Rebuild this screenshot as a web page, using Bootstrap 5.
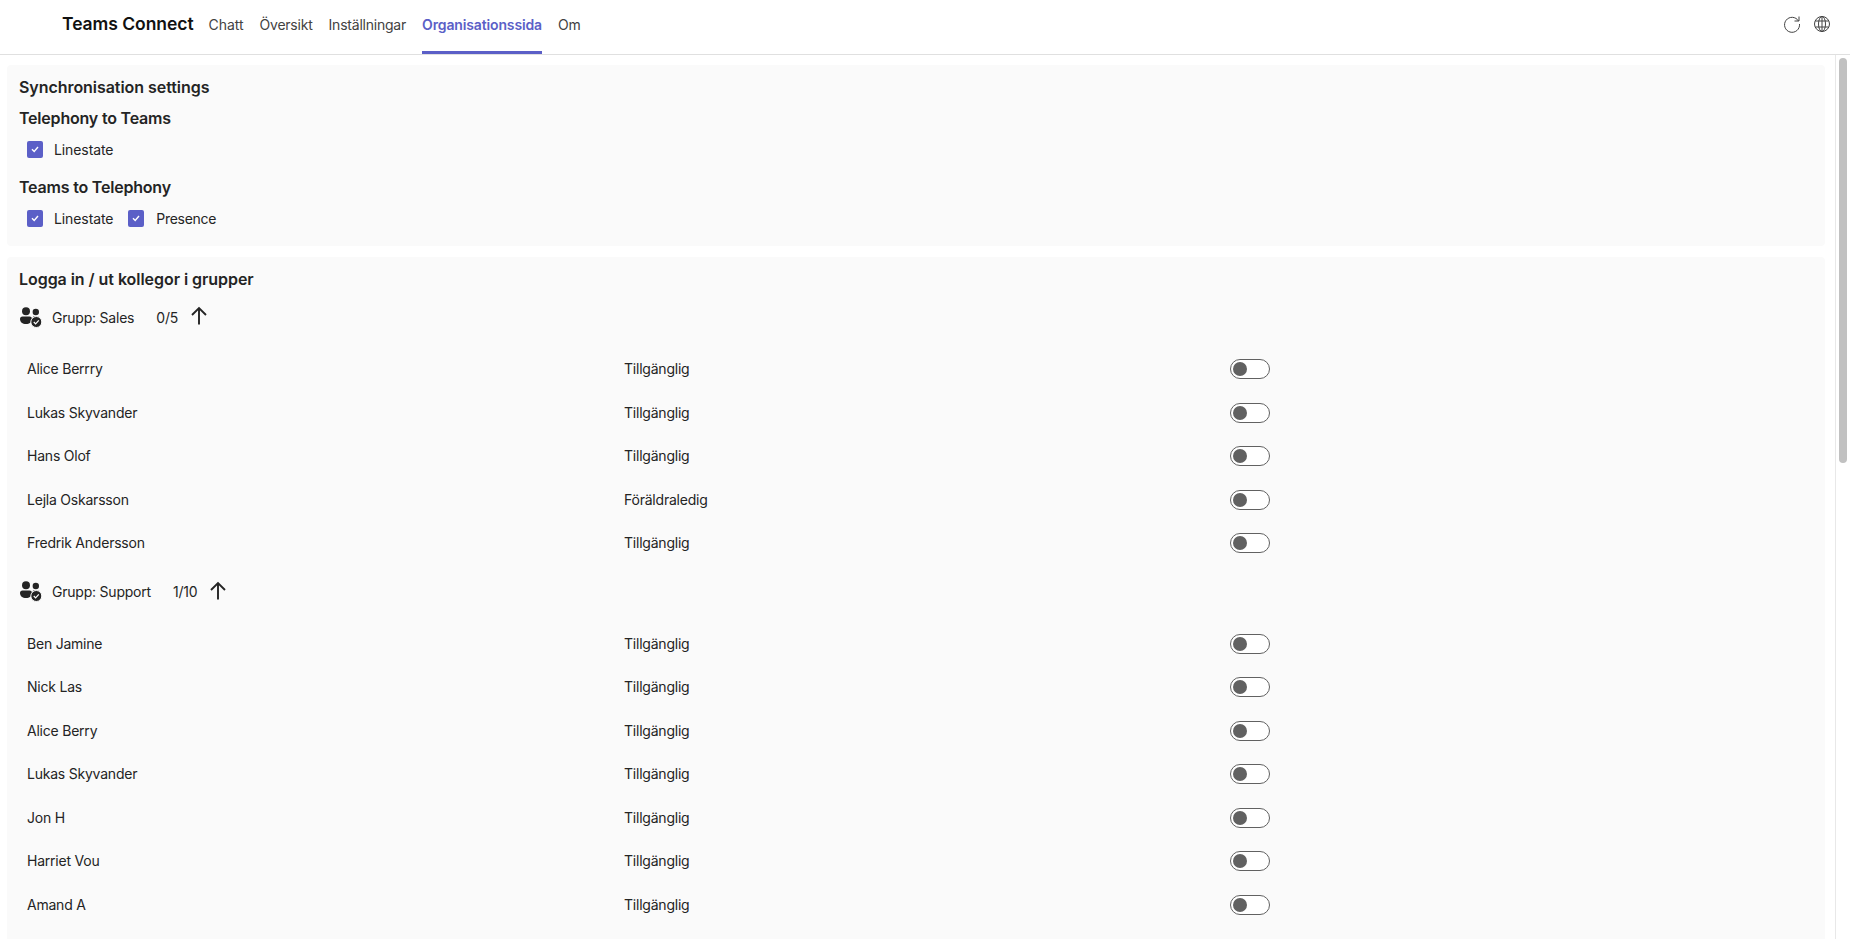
<!doctype html>
<html lang="sv"><head><meta charset="utf-8"><title>Teams Connect</title>
<link href="https://cdn.jsdelivr.net/npm/bootstrap@5.3.0/dist/css/bootstrap.min.css" rel="stylesheet">
<style>
html,body{height:100%;overflow:hidden}
body{font-family:Inter,"Liberation Sans",sans-serif;font-size:14px;letter-spacing:-.22px;color:#242424;background:#fff}
.topbar{height:55px;border-bottom:1px solid #e0e0e0;padding-left:62px;padding-right:19px}
.brand-name{font-size:17.5px;font-weight:600;letter-spacing:-.05px;color:#111;margin-right:15px;margin-bottom:6px}
.tab-item{height:54px;display:flex;align-items:center;color:#424242;text-decoration:none;margin-right:16px;font-size:14px;border-bottom:3px solid transparent;padding-bottom:3px}
.tab-item:first-of-type{letter-spacing:-.05px}
.tab-on{color:#5b5fc7;font-weight:600;letter-spacing:-.14px;border-bottom-color:#5b5fc7}
.shell{height:884px;overflow:hidden}
.pane{flex:1;min-width:0;padding:10px 10px 0 7px;overflow:hidden}
.sheet{background:#fafafa;border-radius:4px;padding:10px 11px 12px 12px;margin-bottom:11px}
.h-main{font-size:16px;font-weight:600;line-height:24px;margin:0;letter-spacing:-.05px}
.h-sub{font-size:16px;font-weight:600;line-height:24px;margin:0;letter-spacing:-.2px}
.h-first{margin-top:7px}
.h-next{margin-top:10px}
.checks{display:flex;height:32px;align-items:center;padding-left:8px;gap:15px;margin-top:3px;letter-spacing:-.1px}
.chk{display:flex;align-items:center;gap:11px}
.chk+.chk{gap:12px;letter-spacing:-.3px}
.tick{width:16px;height:17px;border-radius:2px;background:#5b5fc7;display:flex;align-items:center;justify-content:center}
.grp{height:34px;display:flex;align-items:center;padding-left:1px;margin-top:9px}
.grp-name{margin-left:10px}
.grp-count{margin-left:22px}
.grp-arrow{margin-left:12px;margin-bottom:2px}
.per-row{display:grid;grid-template-columns:597px 606px 1fr;align-items:center;height:43.5px;padding-left:8px}
.tgl{display:block;width:40px;height:20px;border:1px solid #616161;border-radius:10px;position:relative;background:#fff;margin-top:1px}
.tgl::after{content:"";position:absolute;left:2px;top:2px;width:14px;height:14px;border-radius:50%;background:#616161}
.rail{width:15px;border-left:1px solid #e8e8e8;background:#fff;padding:3px 3px 0 3px;flex:none}
.thumb{height:405px;background:#c1c1c1;border-radius:4px}
.people{padding-top:13px;padding-bottom:1px}
.icons-end{gap:12px;margin-bottom:6px}
</style></head>
<body>
<nav class="topbar d-flex align-items-center">
  <span class="brand-name">Teams Connect</span>
  <a class="tab-item" href="#">Chatt</a>
  <a class="tab-item" href="#">Översikt</a>
  <a class="tab-item" href="#">Inställningar</a>
  <a class="tab-item tab-on" href="#">Organisationssida</a>
  <a class="tab-item" href="#">Om</a>
  <div class="ms-auto d-flex align-items-center icons-end">
    <svg width="18" height="18" viewBox="0 0 18 18" fill="none" stroke="#424242" stroke-width="1"><path d="M15.500 6A7.500 7.500 0 1 0 16.500 9"/><path d="M16 1.500V6H11.500"/></svg>
    <svg width="18" height="18" viewBox="0 0 18 18" fill="none" stroke="#424242" stroke-width="1"><circle cx="9" cy="9" r="7.500"/><ellipse cx="9" cy="9" rx="3.500" ry="7.500"/><path d="M2.300 6h13.400M2.300 12h13.400M9 1.500v15"/></svg>
  </div>
</nav>
<div class="shell d-flex">
  <main class="pane">
    <section class="sheet">
      <h2 class="h-main">Synchronisation settings</h2>
      <h3 class="h-sub h-first">Telephony to Teams</h3>
      <div class="checks"><label class="chk"><span class="tick"><svg width="10" height="10" viewBox="0 0 10 10" fill="none" stroke="#fff" stroke-width="1.400"><path d="M2 5.200 4.200 7.400 8 3"/></svg></span>Linestate</label></div>
      <h3 class="h-sub h-next">Teams to Telephony</h3>
      <div class="checks">
        <label class="chk"><span class="tick"><svg width="10" height="10" viewBox="0 0 10 10" fill="none" stroke="#fff" stroke-width="1.400"><path d="M2 5.200 4.200 7.400 8 3"/></svg></span>Linestate</label>
        <label class="chk"><span class="tick"><svg width="10" height="10" viewBox="0 0 10 10" fill="none" stroke="#fff" stroke-width="1.400"><path d="M2 5.200 4.200 7.400 8 3"/></svg></span>Presence</label>
      </div>
    </section>
    <section class="sheet">
      <h2 class="h-main">Logga in / ut kollegor i grupper</h2>
      <div class="grp">
        <svg width="22" height="21" viewBox="0 0 22 21" fill="#242424"><circle cx="6" cy="4.200" r="4"/><circle cx="15.800" cy="5" r="3.200"/><path d="M0 12a2.500 2.500 0 0 1 2.500-2.500h7a2.500 2.500 0 0 1 2.500 2.500c0 3-2.500 5-6 5s-6-2-6-5Z"/><path d="M13 9.500h5.500a2 2 0 0 1 1.200.4 6.500 6.500 0 0 0-6.900 3Z"/><circle cx="16.300" cy="15" r="5.500" stroke="#fafafa" stroke-width="1"/><path d="M13.800 15l1.800 1.800 3.200-3.400" fill="none" stroke="#fff" stroke-width="1.200"/></svg>
        <span class="grp-name">Grupp: Sales</span><span class="grp-count">0/5</span>
        <svg class="grp-arrow" width="18" height="20" viewBox="0 0 18 20" fill="none" stroke="#242424" stroke-width="1.900"><path d="M9 18.500V2M2 9l7-7 7 7"/></svg>
      </div>
      <div class="people">
        <div class="per-row"><span>Alice Berrry</span><span>Tillgänglig</span><span class="tgl"></span></div>
        <div class="per-row"><span>Lukas Skyvander</span><span>Tillgänglig</span><span class="tgl"></span></div>
        <div class="per-row"><span>Hans Olof</span><span>Tillgänglig</span><span class="tgl"></span></div>
        <div class="per-row"><span>Lejla Oskarsson</span><span>Föräldraledig</span><span class="tgl"></span></div>
        <div class="per-row"><span>Fredrik Andersson</span><span>Tillgänglig</span><span class="tgl"></span></div>
      </div>
      <div class="grp">
        <svg width="22" height="21" viewBox="0 0 22 21" fill="#242424"><circle cx="6" cy="4.200" r="4"/><circle cx="15.800" cy="5" r="3.200"/><path d="M0 12a2.500 2.500 0 0 1 2.500-2.500h7a2.500 2.500 0 0 1 2.500 2.500c0 3-2.500 5-6 5s-6-2-6-5Z"/><path d="M13 9.500h5.500a2 2 0 0 1 1.200.4 6.500 6.500 0 0 0-6.900 3Z"/><circle cx="16.300" cy="15" r="5.500" stroke="#fafafa" stroke-width="1"/><path d="M13.800 15l1.800 1.800 3.200-3.400" fill="none" stroke="#fff" stroke-width="1.200"/></svg>
        <span class="grp-name">Grupp: Support</span><span class="grp-count">1/10</span>
        <svg class="grp-arrow" width="18" height="20" viewBox="0 0 18 20" fill="none" stroke="#242424" stroke-width="1.900"><path d="M9 18.500V2M2 9l7-7 7 7"/></svg>
      </div>
      <div class="people pb-5">
        <div class="per-row"><span>Ben Jamine</span><span>Tillgänglig</span><span class="tgl"></span></div>
        <div class="per-row"><span>Nick Las</span><span>Tillgänglig</span><span class="tgl"></span></div>
        <div class="per-row"><span>Alice Berry</span><span>Tillgänglig</span><span class="tgl"></span></div>
        <div class="per-row"><span>Lukas Skyvander</span><span>Tillgänglig</span><span class="tgl"></span></div>
        <div class="per-row"><span>Jon H</span><span>Tillgänglig</span><span class="tgl"></span></div>
        <div class="per-row"><span>Harriet Vou</span><span>Tillgänglig</span><span class="tgl"></span></div>
        <div class="per-row"><span>Amand A</span><span>Tillgänglig</span><span class="tgl"></span></div>
      </div>
    </section>
  </main>
  <div class="rail"><div class="thumb"></div></div>
</div>
<script src="https://cdn.jsdelivr.net/npm/bootstrap@5.3.0/dist/js/bootstrap.bundle.min.js"></script>
</body></html>
